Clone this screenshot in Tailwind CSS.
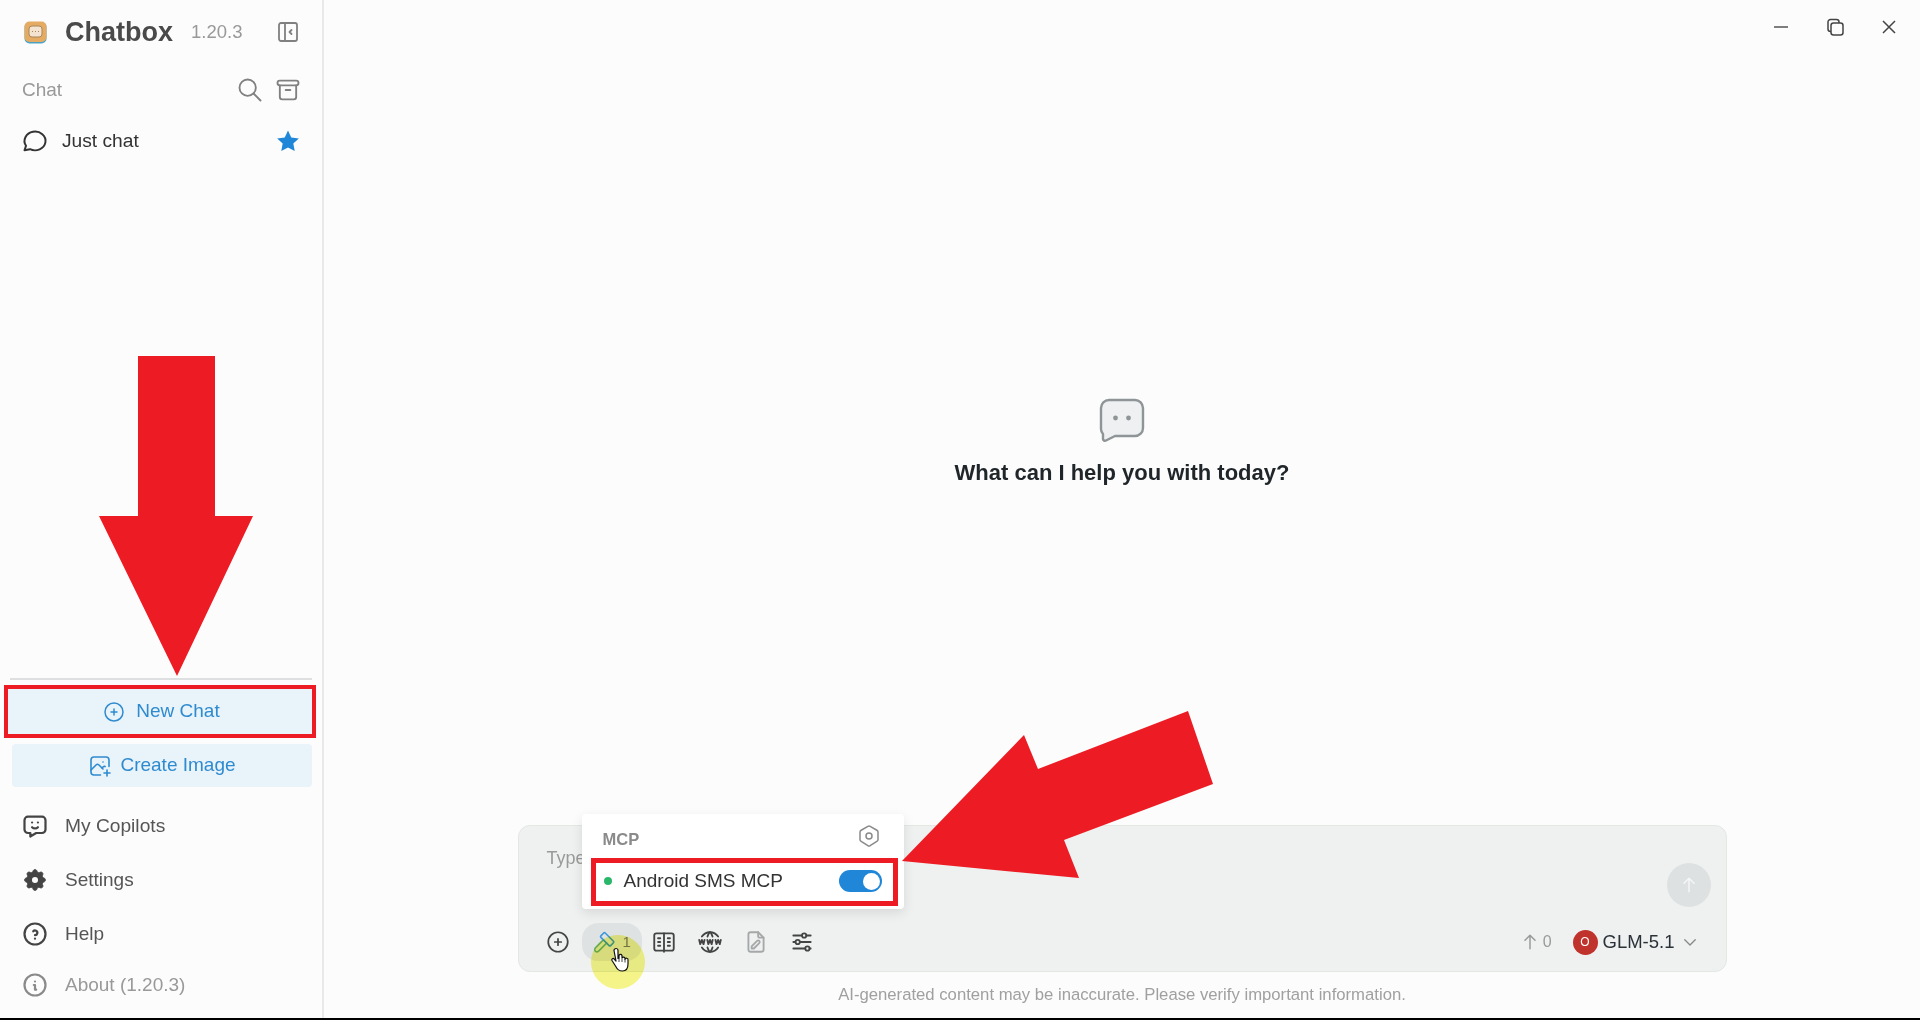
<!DOCTYPE html>
<html lang="en">
<head>
  <meta charset="UTF-8" />
  <title>Chatbox</title>
  <script src="https://cdn.jsdelivr.net/npm/@tailwindcss/browser@4"></script>
</head>
<body class="bg-[#fcfcfc] font-['Liberation_Sans',Arial,sans-serif] overflow-hidden">
<div class="relative h-[1020px] w-[1920px] flex flex-col overflow-hidden">
  <div class="flex flex-1 min-h-0">

    <!-- sidebar -->
    <aside class="w-[324px] shrink-0 border-r-2 border-[#e8e9ea] flex flex-col">
      <div class="h-[64px] flex items-center pl-[24px] pr-[22px]">
        <svg class="w-[23px] h-[23px] shrink-0" viewBox="0 0 23 23">
          <rect x="0.5" y="1" width="22" height="21.5" rx="5" fill="#4aa3c4"/>
          <rect x="0.5" y="0.5" width="22" height="20.5" rx="5" fill="#e5ab62"/>
          <rect x="5" y="5" width="13" height="11" rx="3" fill="#f3e3d0" stroke="#a8865a" stroke-width="1"/>
          <path d="M8 10.500h1M11 10.500h1M14 10.500h1" stroke="#a8865a" stroke-width="1"/>
        </svg>
        <span class="ml-[18px] text-[27px] font-bold text-[#4a4a4a]">Chatbox</span>
        <span class="ml-[18px] text-[18.500px] text-[#999]">1.20.3</span>
        <svg class="ml-auto w-[24px] h-[24px] text-[#808080]" viewBox="0 0 24 24" fill="none" stroke="currentColor" stroke-width="1.800" stroke-linecap="round" stroke-linejoin="round"><path d="M3 5a2 2 0 0 1 2-2h14a2 2 0 0 1 2 2v14a2 2 0 0 1-2 2h-14a2 2 0 0 1-2-2z"/><path d="M9 3v18"/><path d="M15.500 10l-2 2l2 2"/></svg>
      </div>

      <div class="h-[52px] flex items-center pl-[22px] pr-[20px]">
        <span class="text-[19px] text-[#999]">Chat</span>
        <svg class="ml-auto w-[28px] h-[28px] text-[#808080]" viewBox="0 0 24 24" fill="none" stroke="currentColor" stroke-width="1.600" stroke-linecap="round" stroke-linejoin="round"><circle cx="10" cy="10" r="7"/><path d="M21 21l-6-6"/></svg>
        <svg class="ml-[10px] w-[28px] h-[28px] text-[#808080]" viewBox="0 0 24 24" fill="none" stroke="currentColor" stroke-width="1.600" stroke-linecap="round" stroke-linejoin="round"><path d="M3 6a2 2 0 0 1 2-2h14a2 2 0 0 1 2 2a2 2 0 0 1-2 2h-14a2 2 0 0 1-2-2z"/><path d="M5 8v10a2 2 0 0 0 2 2h10a2 2 0 0 0 2-2v-10"/><path d="M10 12h4"/></svg>
      </div>

      <div class="h-[50px] flex items-center pl-[21px] pr-[21px]">
        <svg class="w-[28px] h-[28px] text-[#333]" viewBox="0 0 24 24" fill="none" stroke="currentColor" stroke-width="1.700" stroke-linecap="round" stroke-linejoin="round"><path d="M3 20l1.300-3.900a9 8 0 1 1 3.400 2.900l-4.700 1"/></svg>
        <span class="ml-[13px] text-[19.200px] text-[#333]">Just chat</span>
        <svg class="ml-auto w-[26px] h-[26px] text-[#1f86d8]" viewBox="0 0 24 24" fill="currentColor"><path d="M12 2.300l3 6.400l7 .9l-5.100 4.800l1.300 6.900l-6.200-3.400l-6.200 3.400l1.300-6.900l-5.100-4.800l7-.9z"/></svg>
      </div>

      <div class="flex-1"></div>

      <div class="h-[2px] mx-[10px] bg-[#dedfe0]"></div>
      <div class="mt-[5px] mx-[4px] h-[53px] w-[312px] border-[4px] border-[#ed1c24] bg-[#e9f3fa] flex items-center justify-center gap-[10px] pl-[2px] text-[#2e8bd0]">
        <svg class="w-[24px] h-[24px]" viewBox="0 0 24 24" fill="none" stroke="currentColor" stroke-width="1.500" stroke-linecap="round"><circle cx="12" cy="12" r="9"/><path d="M9 12h6M12 9v6"/></svg>
        <span class="text-[19px]">New Chat</span>
      </div>
      <div class="mt-[6px] ml-[12px] h-[43px] w-[300px] rounded-[4px] bg-[#e9f3fa] flex items-center justify-center gap-[8px] text-[#2e8bd0]">
        <svg class="w-[24px] h-[24px]" viewBox="0 0 24 24" fill="none" stroke="currentColor" stroke-width="1.600" stroke-linecap="round" stroke-linejoin="round"><path d="M15 8h.01"/><path d="M12.500 21h-6.500a3 3 0 0 1-3-3v-12a3 3 0 0 1 3-3h12a3 3 0 0 1 3 3v6.500"/><path d="M3 16l5-5c.928-.893 2.072-.893 3 0l4 4"/><path d="M14 14l1-1c.670-.644 1.450-.824 2.182-.54"/><path d="M16 19h6M19 16v6"/></svg>
        <span class="text-[19px]">Create Image</span>
      </div>

      <div class="mt-[12px] h-[54px] flex items-center pl-[21px] text-[#555]">
        <svg class="w-[28px] h-[28px] text-[#444]" viewBox="0 0 24 24" fill="none" stroke="currentColor" stroke-width="1.900" stroke-linecap="round" stroke-linejoin="round"><path d="M18 4a3 3 0 0 1 3 3v8a3 3 0 0 1-3 3h-5l-5 3v-3h-2a3 3 0 0 1-3-3v-8a3 3 0 0 1 3-3z"/><path d="M9.500 9h.01M14.500 9h.01"/><path d="M9.500 13a3.500 3.500 0 0 0 5 0"/></svg>
        <span class="ml-[16px] text-[19.200px]">My Copilots</span>
      </div>
      <div class="h-[54px] flex items-center pl-[21px] text-[#555]">
        <svg class="w-[28px] h-[28px] text-[#444]" viewBox="0 0 24 24"><path fill="currentColor" stroke="currentColor" stroke-width="0.600" d="M10.325 4.317c.426-1.756 2.924-1.756 3.350 0a1.724 1.724 0 0 0 2.573 1.066c1.543-.94 3.310 .826 2.370 2.370a1.724 1.724 0 0 0 1.065 2.572c1.756 .426 1.756 2.924 0 3.350a1.724 1.724 0 0 0-1.066 2.573c.94 1.543-.826 3.310-2.370 2.370a1.724 1.724 0 0 0-2.572 1.065c-.426 1.756-2.924 1.756-3.350 0a1.724 1.724 0 0 0-2.573-1.066c-1.543 .94-3.310-.826-2.370-2.370a1.724 1.724 0 0 0-1.065-2.572c-1.756-.426-1.756-2.924 0-3.350a1.724 1.724 0 0 0 1.066-2.573c-.94-1.543 .826-3.310 2.370-2.370c1 .608 2.296 .07 2.572-1.065z"/><circle cx="12" cy="12" r="2.600" fill="#fcfcfc"/></svg>
        <span class="ml-[16px] text-[19px]">Settings</span>
      </div>
      <div class="h-[54px] flex items-center pl-[21px] text-[#555]">
        <svg class="w-[28px] h-[28px] text-[#444]" viewBox="0 0 24 24" fill="none" stroke="currentColor" stroke-width="1.900" stroke-linecap="round" stroke-linejoin="round"><circle cx="12" cy="12" r="9"/><path d="M12 16v.01"/><path d="M12 13a2 2 0 0 0 .914-3.782a1.980 1.980 0 0 0-2.414 .483"/></svg>
        <span class="ml-[16px] text-[19px]">Help</span>
      </div>
      <div class="h-[48px] mb-[9px] flex items-center pl-[21px] text-[#999]">
        <svg class="w-[28px] h-[28px] text-[#8a8a8a]" viewBox="0 0 24 24" fill="none" stroke="currentColor" stroke-width="1.900" stroke-linecap="round" stroke-linejoin="round"><circle cx="12" cy="12" r="9"/><path d="M12 9h.01"/><path d="M11 12h1v4h1"/></svg>
        <span class="ml-[16px] text-[19px]">About (1.20.3)</span>
      </div>
    </aside>

    <!-- main -->
    <main class="flex-1 flex flex-col min-w-0">
      <div class="h-[54px] shrink-0 flex items-center justify-end">
        <svg class="w-[18px] h-[18px] mr-[35px] text-[#555]" viewBox="0 0 18 18" fill="none" stroke="currentColor" stroke-width="1.500"><path d="M2 9h14"/></svg>
        <svg class="w-[20px] h-[20px] mr-[36px] text-[#444]" viewBox="0 0 20 20" fill="none" stroke="currentColor" stroke-width="1.500"><rect x="6" y="6" width="12" height="12" rx="2.500"/><path d="M6 14.500h-.5a2.500 2.500 0 0 1-2.500-2.500v-7a2.500 2.500 0 0 1 2.500-2.500h6a2.500 2.500 0 0 1 2.500 2.500v1"/></svg>
        <svg class="w-[16px] h-[16px] mr-[23px] text-[#444]" viewBox="0 0 16 16" fill="none" stroke="currentColor" stroke-width="1.500"><path d="M2 2l12 12M14 2l-12 12"/></svg>
      </div>

      <div class="flex-1 flex flex-col items-center justify-center pt-[7px]">
        <svg class="w-[46px] h-[44px]" viewBox="0 0 46 44">
          <path d="M10 2h26a8 8 0 0 1 8 8v20a8 8 0 0 1-8 8h-20l-9 4.500a2 2 0 0 1-3-1.500v-5a8 8 0 0 1-2-6v-20a8 8 0 0 1 8-8z" fill="#eef0f1" stroke="#8f9597" stroke-width="2.400" stroke-linejoin="round"/>
          <circle cx="16.500" cy="20" r="2.400" fill="#8f9597"/><circle cx="29.500" cy="20" r="2.400" fill="#8f9597"/>
        </svg>
        <h1 class="mt-[16px] text-[22px] leading-[30px] font-bold text-[#1f2529]">What can I help you with today?</h1>
      </div>

      <div class="relative shrink-0 mx-auto w-[1209px] h-[147px] rounded-[12px] border border-[#e3e8e3] bg-[#eff1f1] flex flex-col">
        <div class="flex-1 relative pl-[28px] pt-[19px] text-[18px] text-[#9a9a9a]">
          Type your question here...
          <div class="absolute right-[15px] top-[37px] w-[44px] h-[44px] rounded-full bg-[#dde1e1] flex items-center justify-center">
            <svg class="w-[20px] h-[20px] text-[#f5f6f6]" viewBox="0 0 24 24" fill="none" stroke="currentColor" stroke-width="1.800" stroke-linecap="round" stroke-linejoin="round"><path d="M12 20v-16M6 10l6-6l6 6"/></svg>
          </div>
        </div>
        <div class="h-[58px] flex items-center pl-[26px] pr-[27px]">
          <svg class="w-[26px] h-[26px] text-[#444]" viewBox="0 0 24 24" fill="none" stroke="currentColor" stroke-width="1.600" stroke-linecap="round"><circle cx="12" cy="12" r="9"/><path d="M9 12h6M12 9v6"/></svg>
          <div class="ml-[11px] w-[60px] h-[38px] rounded-[16px] bg-[#dfe2e3] flex items-center pl-[9px]">
            <svg class="w-[26px] h-[26px]" viewBox="0 0 24 24" fill="none" stroke-width="1.500" stroke-linecap="round" stroke-linejoin="round"><path stroke="#69b082" d="M11.414 10l-7.383 7.418a2.091 2.091 0 0 0 0 2.967a2.110 2.110 0 0 0 2.976 0l7.407-7.385"/><path stroke="#3f97d8" d="M18.121 15.293l2.586-2.586a1 1 0 0 0 0-1.414l-7.586-7.586a1 1 0 0 0-1.414 0l-2.586 2.586a1 1 0 0 0 0 1.414l7.586 7.586a1 1 0 0 0 1.414 0z"/></svg>
            <span class="ml-[6px] text-[15px] text-[#777]">1</span>
          </div>
          <svg class="ml-[9px] w-[26px] h-[26px] text-[#444]" viewBox="0 0 24 24" fill="none" stroke="currentColor" stroke-width="1.700" stroke-linecap="round" stroke-linejoin="round"><path d="M12 20h-7a2 2 0 0 1-2-2v-12a2 2 0 0 1 2-2h14a2 2 0 0 1 2 2v12a2 2 0 0 1-2 2z"/><path d="M12 4v17"/><path d="M6.500 8.500h2M6.500 12h2M6.500 15.500h2M15.500 8.500h2M15.500 12h2M15.500 15.500h2"/></svg>
          <svg class="ml-[20px] w-[26px] h-[26px] text-[#444]" viewBox="0 0 24 24" fill="none" stroke="currentColor" stroke-width="1.700" stroke-linecap="round" stroke-linejoin="round"><path d="M19.500 7a9 9 0 0 0-7.500-4a8.991 8.991 0 0 0-7.484 4"/><path d="M11.500 3a16.989 16.989 0 0 0-1.826 4"/><path d="M12.500 3a16.989 16.989 0 0 1 1.828 4"/><path d="M19.500 17a9 9 0 0 1-7.500 4a8.991 8.991 0 0 1-7.484-4"/><path d="M11.500 21a16.989 16.989 0 0 1-1.826-4"/><path d="M12.500 21a16.989 16.989 0 0 0 1.828-4"/><path d="M2 10l1 4l1.500-4l1.500 4l1-4"/><path d="M17 10l1 4l1.500-4l1.500 4l1-4"/><path d="M9.500 10l1 4l1.500-4l1.500 4l1-4"/></svg>
          <svg class="ml-[20px] w-[26px] h-[26px] text-[#a5a8a9]" viewBox="0 0 24 24" fill="none" stroke="currentColor" stroke-width="1.700" stroke-linecap="round" stroke-linejoin="round"><path d="M14 3v4a1 1 0 0 0 1 1h4"/><path d="M17 21h-10a2 2 0 0 1-2-2v-14a2 2 0 0 1 2-2h7l5 5v11a2 2 0 0 1-2 2z"/><path d="M10 18l5-5a1.414 1.414 0 0 0-2-2l-5 5v2h2z"/></svg>
          <svg class="ml-[20px] w-[26px] h-[26px] text-[#444]" viewBox="0 0 24 24" fill="none" stroke="currentColor" stroke-width="1.700" stroke-linecap="round" stroke-linejoin="round"><circle cx="14" cy="6" r="2"/><path d="M4 6h8M16 6h4"/><circle cx="8" cy="12" r="2"/><path d="M4 12h2M10 12h10"/><circle cx="17" cy="18" r="2"/><path d="M4 18h11M19 18h1"/></svg>

          <svg class="ml-auto w-[20px] h-[20px] text-[#9a9a9a]" viewBox="0 0 24 24" fill="none" stroke="currentColor" stroke-width="1.800" stroke-linecap="round" stroke-linejoin="round"><path d="M12 20v-16M6 10l6-6l6 6"/></svg>
          <span class="ml-[3px] text-[16px] text-[#9a9a9a]">0</span>
          <span class="ml-[21px] w-[25px] h-[25px] rounded-full bg-[#c0322c] text-white text-[12px] flex items-center justify-center">O</span>
          <span class="ml-[5px] text-[18.500px] text-[#2a3238]">GLM-5.1</span>
          <svg class="ml-[6px] w-[18px] h-[18px] text-[#888]" viewBox="0 0 24 24" fill="none" stroke="currentColor" stroke-width="1.800" stroke-linecap="round" stroke-linejoin="round"><path d="M5 9l7 7l7-7"/></svg>
        </div>

        <!-- MCP popup -->
        <div class="absolute left-[63px] -top-[12px] w-[322px] h-[95px] bg-white rounded-[4px] shadow-[0_4px_12px_rgba(0,0,0,0.10)] flex flex-col">
          <div class="h-[44px] flex items-center pl-[21px] pr-[23px]">
            <span class="mt-[6px] text-[16.500px] font-bold text-[#8a8a8a]">MCP</span>
            <svg class="ml-auto w-[24px] h-[24px] text-[#8a8a8a]" viewBox="0 0 24 24" fill="none" stroke="currentColor" stroke-width="1.500" stroke-linecap="round" stroke-linejoin="round"><path d="M19.875 6.270a2.225 2.225 0 0 1 1.125 1.948v7.284c0 .809-.443 1.555-1.158 1.948l-6.750 4.270a2.269 2.269 0 0 1-2.184 0l-6.750-4.270a2.225 2.225 0 0 1-1.158-1.948v-7.285c0-.809 .443-1.554 1.158-1.947l6.750-3.980a2.330 2.330 0 0 1 2.250 0l6.750 3.980z"/><circle cx="12" cy="12" r="3"/></svg>
          </div>
          <div class="ml-[9px] w-[307px] h-[48px] border-[5px] border-[#ed1c24] flex items-center pl-[8px] pr-[11px] pb-[2px]">
            <span class="w-[8px] h-[8px] rounded-full bg-[#2bb769]"></span>
            <span class="ml-[12px] text-[19px] text-[#333]">Android SMS MCP</span>
            <span class="ml-auto w-[43px] h-[22px] rounded-full bg-[#1f86d8] flex items-center justify-end pr-[2px]">
              <span class="w-[17px] h-[17px] rounded-full bg-white"></span>
            </span>
          </div>
        </div>
      </div>

      <p class="shrink-0 h-[46px] pt-[10px] text-center text-[16.700px] text-[#a0a0a0]">AI-generated content may be inaccurate. Please verify important information.</p>
    </main>
  </div>
  <div class="h-[2px] shrink-0 bg-black"></div>

  <!-- annotation overlay -->
  <svg class="absolute left-0 top-0 w-[1920px] h-[1020px] pointer-events-none" viewBox="0 0 1920 1020">
    <path fill="#ed1c24" d="M138 356h77v160h38l-76 160l-78-160h39z"/>
    <path fill="#ed1c24" d="M902 861l122-126l14 34l150-58l25 73l-149 56l15 38z"/>
    <circle class="mix-blend-multiply" cx="618" cy="962" r="27" fill="#f7f78a"/>
    <g transform="translate(611 948)">
      <path d="M3 2.500a2 2 0 0 1 4 0v8l1-.5v-2.500a1.600 1.600 0 0 1 3 0v2.500a1.600 1.600 0 0 1 3 .5v1a1.500 1.500 0 0 1 3 .5v4c0 4-2 7-5.500 7s-5-1-7-5l-3.500-5.500c-.8-1.500 1-2.800 2.200-1.500l1.800 2z" fill="#fff" stroke="#111" stroke-width="1.200" stroke-linejoin="round"/>
      <path d="M8 10v4M11 10.500v3.500M14 11.500v3" stroke="#111" stroke-width="0.800"/>
    </g>
  </svg>
</div>
</body>
</html>
